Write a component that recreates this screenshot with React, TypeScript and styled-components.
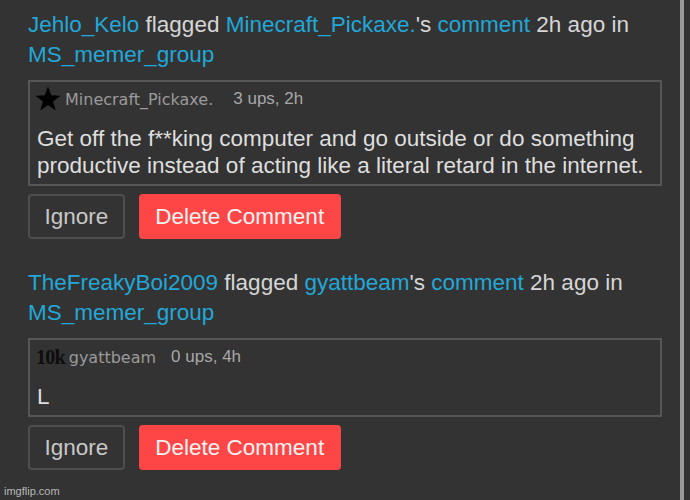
import React from "react";
import styled, { createGlobalStyle } from "styled-components";

const Global = createGlobalStyle`
  html, body { margin: 0; padding: 0; background: #333333; }
  body { font-family: "Liberation Sans", Arial, sans-serif; }
`;

const Page = styled.div`
  position: relative;
  display: flex;
  width: 690px;
  height: 500px;
  background: #333333;
  overflow: hidden;
`;

const Column = styled.div`
  flex: 1;
  padding: 10px 0 0 28px;
  display: flex;
  flex-direction: column;
`;

const ScrollBar = styled.div`
  width: 4px;
  background: #9a9a9a;
  margin-right: 6px;
`;

const Entry = styled.div`
  display: flex;
  flex-direction: column;
  margin-bottom: 29px;
`;

const Header = styled.div`
  font-size: 22.5px;
  line-height: 29.5px;
  color: #d6d6d6;
  margin-bottom: 11px;
`;

const Link = styled.span`
  color: #22a8d8;
`;

const Box = styled.div`
  margin-right: 18px;
  border: 2px solid #565656;
  padding: 4px 8px 5px 6px;
  display: flex;
  flex-direction: column;
`;

const Meta = styled.div`
  display: flex;
  align-items: center;
  height: 26px;
  margin-bottom: 13px;
`;

const Badge = styled.span`
  font-family: "Liberation Serif", "Times New Roman", serif;
  font-weight: bold;
  font-size: 20px;
  letter-spacing: -0.8px;
  color: #0d0d0d;
  margin-right: 4px;
`;

const StarIcon = styled.svg`
  width: 26px;
  height: 26px;
  margin-right: 4px;
  margin-left: -1px;
`;

const User = styled.span`
  font-family: "DejaVu Sans", Verdana, sans-serif;
  font-size: 16px;
  color: #9a9a9a;
`;

const Stats = styled.span<{ gap: number }>`
  font-size: 17px;
  color: #a8a8a8;
  margin-left: ${(p) => p.gap}px;
`;

const Text = styled.div`
  font-size: 22.5px;
  line-height: 27px;
  color: #dedede;
  padding-left: 1px;
`;

const Actions = styled.div`
  display: flex;
  gap: 14px;
  margin-top: 8px;
`;

const Button = styled.button<{ danger?: boolean }>`
  height: 45px;
  box-sizing: border-box;
  padding: 0 14.5px;
  font-family: "Liberation Sans", Arial, sans-serif;
  font-size: 22.5px;
  border-radius: 4px;
  border: 2px solid ${(p) => (p.danger ? "#ff4646" : "#4e4e4e")};
  background: ${(p) => (p.danger ? "#ff4646" : "#333333")};
  color: ${(p) => (p.danger ? "#f4f4f4" : "#c8c8c8")};
`;

const Watermark = styled.div`
  position: absolute;
  left: 4px;
  bottom: 3px;
  font-size: 11px;
  color: #b8b8b8;
`;

const Star = () => (
  <StarIcon viewBox="0 0 24 24">
    <polygon
      points="12,0.5 14.9,8.6 23.5,8.9 16.7,14.2 19.1,22.5 12,17.6 4.9,22.5 7.3,14.2 0.5,8.9 9.1,8.6"
      fill="#000"
    />
  </StarIcon>
);

type Item = {
  flagger: string;
  author: string;
  badge: "star" | "10k";
  stats: string;
  gap: number;
  text: string;
};

const items: Item[] = [
  {
    flagger: "Jehlo_Kelo",
    author: "Minecraft_Pickaxe.",
    badge: "star",
    stats: "3 ups, 2h",
    gap: 20,
    text: "Get off the f**king computer and go outside or do something productive instead of acting like a literal retard in the internet.",
  },
  {
    flagger: "TheFreakyBoi2009",
    author: "gyattbeam",
    badge: "10k",
    stats: "0 ups, 4h",
    gap: 15,
    text: "L",
  },
];

export default function App() {
  return (
    <>
      <Global />
      <Page>
        <Column>
          {items.map((it) => (
            <Entry key={it.author}>
              <Header>
                <Link>{it.flagger}</Link> flagged <Link>{it.author}</Link>'s{" "}
                <Link>comment</Link> 2h ago in <Link>MS_memer_group</Link>
              </Header>
              <Box>
                <Meta>
                  {it.badge === "star" ? <Star /> : <Badge>10k</Badge>}
                  <User>{it.author}</User>
                  <Stats gap={it.gap}>{it.stats}</Stats>
                </Meta>
                <Text>{it.text}</Text>
              </Box>
              <Actions>
                <Button>Ignore</Button>
                <Button danger>Delete Comment</Button>
              </Actions>
            </Entry>
          ))}
        </Column>
        <ScrollBar />
        <Watermark>imgflip.com</Watermark>
      </Page>
    </>
  );
}
